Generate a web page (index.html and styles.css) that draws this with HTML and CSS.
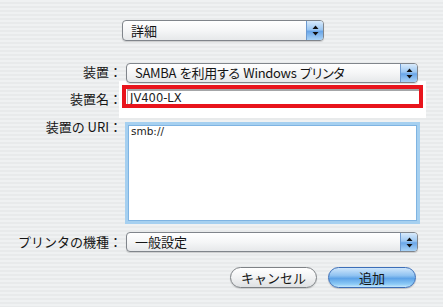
FILE: index.html
```html
<!DOCTYPE html>
<html lang="ja">
<head>
<meta charset="utf-8">
<link rel="stylesheet" href="styles.css">
</head>
<body>
<div class="dialog">
  <div class="top-row">
    <div class="popup popup-top">
      <span class="popup-text">詳細</span>
      <span class="arrows"><svg width="7" height="11" viewBox="0 0 7 11"><path d="M3.5 0.5 L6.5 4 L0.5 4 Z M0.5 7 L6.5 7 L3.5 10.5 Z" fill="#111"/></svg></span>
    </div>
  </div>
  <div class="form">
    <div class="label l-device">装置：</div>
    <div class="popup popup-device">
      <span class="popup-text prop">SAMBA を利用する Windows プリンタ</span>
      <span class="arrows"><svg width="7" height="11" viewBox="0 0 7 11"><path d="M3.5 0.5 L6.5 4 L0.5 4 Z M0.5 7 L6.5 7 L3.5 10.5 Z" fill="#111"/></svg></span>
    </div>

    <div class="label l-name">装置名：</div>
    <div class="highlight">
      <div class="redbox">
        <div class="textfield">JV400-LX</div>
      </div>
    </div>

    <div class="label l-uri">装置の URI：</div>
    <div class="textarea">smb://</div>

    <div class="label l-model">プリンタの機種：</div>
    <div class="popup popup-model">
      <span class="popup-text">一般設定</span>
      <span class="arrows"><svg width="7" height="11" viewBox="0 0 7 11"><path d="M3.5 0.5 L6.5 4 L0.5 4 Z M0.5 7 L6.5 7 L3.5 10.5 Z" fill="#111"/></svg></span>
    </div>
  </div>
  <div class="buttons">
    <div class="btn btn-cancel">キャンセル</div>
    <div class="btn btn-add">追加</div>
  </div>
</div>
</body>
</html>
```
FILE: styles.css
```css
html, body {
  margin: 0;
  padding: 0;
}
body {
  width: 443px;
  height: 307px;
  overflow: hidden;
  background: repeating-linear-gradient(to bottom, #eff1f2 0, #eff1f2 2px, #e8eaeb 2px, #e8eaeb 4px);
  font-family: "Noto Sans CJK JP", sans-serif;
  font-size: 13px;
  color: #151515;
}
.dialog {
  padding-top: 20px;
}
.top-row {
  padding-left: 122px;
}
.popup {
  position: relative;
  box-sizing: border-box;
  display: flex;
  align-items: center;
  border: 1px solid #80858b;
  border-radius: 4px;
  background: linear-gradient(to bottom, #ffffff 0%, #f5f6f7 50%, #e6e8ea 100%);
  box-shadow: 0 1px 1px rgba(0,0,0,0.15);
  overflow: hidden;
}
.popup-text {
  flex: 1;
  padding-left: 8px;
  line-height: 16px;
  white-space: nowrap;
}
.prop {
  font-feature-settings: "palt" 1;
  letter-spacing: -0.3px;
  word-spacing: 1px;
}
.arrows {
  align-self: stretch;
  width: 16px;
  display: flex;
  align-items: center;
  justify-content: center;
  border-left: 1px solid #6d9ad0;
  background: linear-gradient(to bottom, #d8eafb 0%, #9cc7f2 45%, #6aa6e8 55%, #a9d3f7 100%);
}
.popup-top {
  width: 202px;
  height: 21px;
}
.form {
  display: grid;
  grid-template-columns: 122px 292px;
  column-gap: 4px;
  margin-top: 22px;
}
.label {
  text-align: right;
  line-height: 20px;
  white-space: nowrap;
}
.popup-device {
  height: 20px;
}
.l-device {
  margin-top: -1px;
}
.l-name {
  margin-top: 6px;
}
.highlight {
  margin: -2px -8px 0 -7px;
  padding: 4px 3px 10px 3px;
  background: #ffffff;
}
.redbox {
  border: 4px solid #e8141c;
  height: 15px;
  overflow: hidden;
}
.textfield {
  box-sizing: border-box;
  height: 17px;
  margin-left: 1px;
  border-top: 2px solid #a4a6a8;
  border-left: 1px solid #b5b7b9;
  padding-left: 2px;
  padding-top: 1px;
  font-family: "DejaVu Sans", sans-serif;
  font-size: 11.5px;
  line-height: 12px;
  color: #1c1c1c;
}
.l-uri {
  margin-top: -1px;
}
.textarea {
  margin: 4px -2px 0 -1px;
  height: 102px;
  box-sizing: border-box;
  border: 3px solid #a6d0f0;
  box-shadow: inset 0 0 0 1px #7fb4e2;
  background: #fff;
  padding: 0 3px;
  font-family: "DejaVu Sans", sans-serif;
  font-size: 10.5px;
  line-height: 12px;
  color: #222;
}
.l-model {
  margin-top: 8px;
}
.popup-model {
  margin-top: 8px;
  height: 20px;
}
.buttons {
  display: flex;
  justify-content: flex-end;
  gap: 11px;
  padding-right: 27px;
  margin-top: 15px;
}
.btn {
  box-sizing: border-box;
  height: 21px;
  width: 87px;
  border-radius: 11px;
  text-align: center;
  line-height: 19px;
  font-size: 13px;
}
.btn-cancel {
  border: 1px solid #7e8286;
  background: linear-gradient(to bottom, #ffffff 0%, #f1f2f3 50%, #dfe1e3 100%);
  box-shadow: 0 1px 1px rgba(0,0,0,0.15);
}
.btn-add {
  width: 88px;
  border: 1px solid #3d6fb8;
  background: linear-gradient(to bottom, #cfe6fb 0%, #8fc2f1 40%, #5ea3e7 55%, #8ccaf6 85%, #c4e8fc 100%);
  box-shadow: 0 1px 1px rgba(0,0,0,0.2);
}
```
